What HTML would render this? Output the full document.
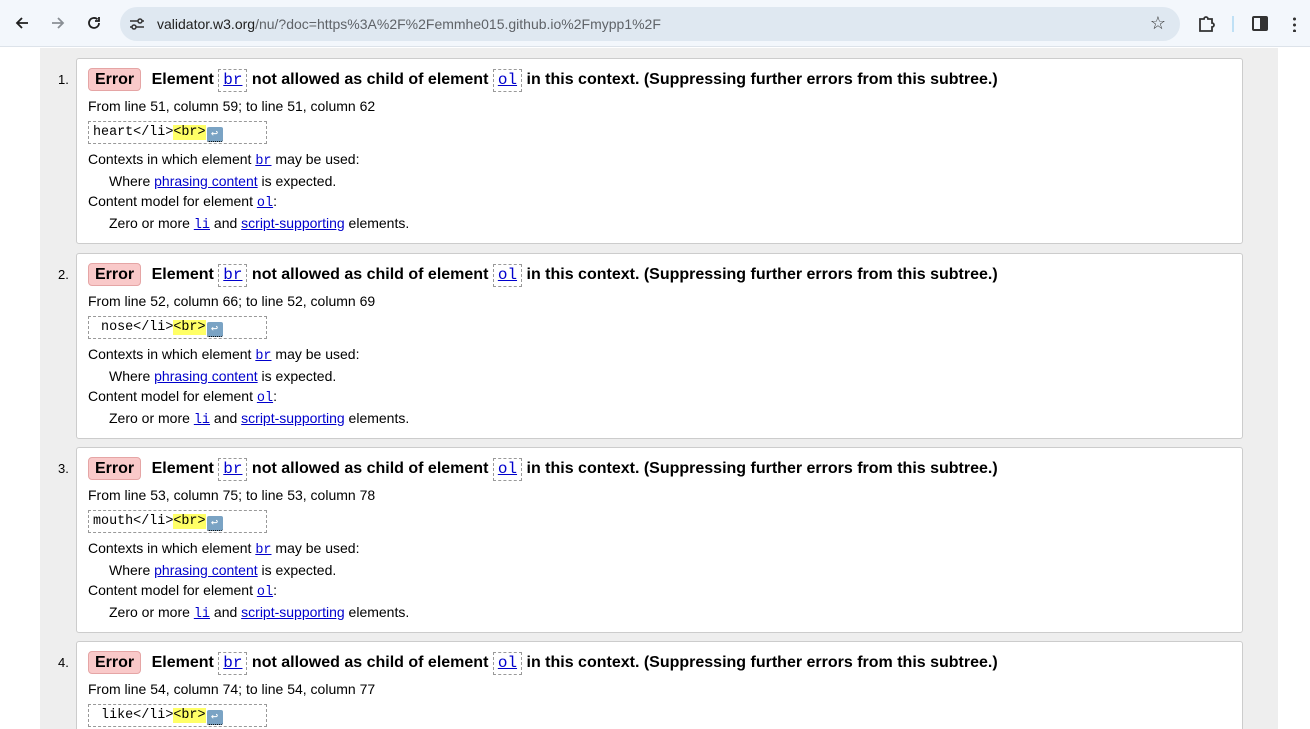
<!DOCTYPE html>
<html><head><meta charset="utf-8"><style>
*{margin:0;padding:0;box-sizing:border-box}
html,body{width:1310px;height:729px;overflow:hidden}
body{background:#fff;font-family:"Liberation Sans",Arial,sans-serif;position:relative;color:#000}
.bar{position:absolute;left:0;top:0;width:1310px;height:47px;background:#f3f7fc;border-bottom:1px solid #dde3ea}
.url{position:absolute;left:120px;top:7px;width:1060px;height:34px;border-radius:17px;background:#dfe8f1}
.url .t{position:absolute;left:37px;top:9px;font-size:14px;color:#1f1f1f}
.url .t span{color:#5f6368}
.gray{position:absolute;left:40px;top:48px;width:1238px;height:681px;background:#eee}
.card{position:absolute;left:76px;width:1167px;height:186px;background:#fff;border:1px solid #ccc;border-radius:3px}
.num{position:absolute;left:58px;font-size:13px}
.ab{position:absolute;white-space:nowrap}
.h{left:11px;top:9px;font-size:16px;font-weight:bold;line-height:24px}
.err{display:inline-block;background:#f9c9c9;border:1px solid #e5a5a5;border-radius:4px;padding:0 6px;height:23px;line-height:21px;margin-right:6px}
.c{display:inline-block;border:1px dashed #999;font-family:"Liberation Mono",monospace;font-weight:normal;padding:0 4px;height:23px;line-height:21px;font-size:16px}
a{color:#00c;text-decoration:underline}
.s{font-size:14px;left:11px}
.m{font-family:"Liberation Mono",monospace;font-size:13.5px}
.code{left:11px;width:179px;height:23px;border:1px dashed #999;font-family:"Liberation Mono",monospace;font-size:13.4px;line-height:21px;padding-left:4px}
.hl{background:#ff6}
.ret{display:inline-block;width:16px;height:15px;background:#7aa3c4;border-radius:2px;vertical-align:-2px;color:#fff;font-size:12px;line-height:15px;text-align:center;border-bottom:1px dotted #000;margin-left:1px}
.wrap{position:absolute;left:0;top:0;width:1310px;height:729px;overflow:hidden}
</style></head><body>
<div class="bar">
<svg style="position:absolute;left:14px;top:15px" width="16" height="16" viewBox="0 0 16 16"><path d="M14 8H3M8 3L3 8l5 5" stroke="#1f1f1f" stroke-width="1.8" fill="none"/></svg>
<svg style="position:absolute;left:50px;top:15px" width="16" height="16" viewBox="0 0 16 16"><path d="M2 8h11M8 3l5 5-5 5" stroke="#8a8f95" stroke-width="1.8" fill="none"/></svg>
<svg style="position:absolute;left:86px;top:15px" width="16" height="16" viewBox="0 0 16 16"><path d="M13 8a5 5 0 1 1-1.5-3.6M13 2v4h-4" stroke="#1f1f1f" stroke-width="1.8" fill="none"/></svg>
<div class="url"><svg style="position:absolute;left:9px;top:10px" width="16" height="14" viewBox="0 0 16 14"><path d="M1 4h8M13 4h2M1 10h2M7 10h8" stroke="#333" stroke-width="1.6"/><circle cx="11" cy="4" r="2" stroke="#333" stroke-width="1.5" fill="none"/><circle cx="5" cy="10" r="2" stroke="#333" stroke-width="1.5" fill="none"/></svg><div class="t">validator.w3.org<span>/nu/?doc=https%3A%2F%2Femmhe015.github.io%2Fmypp1%2F</span></div>
<div style="position:absolute;right:14px;top:6px;font-size:18px;color:#333">☆</div></div>
<svg style="position:absolute;left:1197px;top:14px" width="20" height="20" viewBox="0 0 20 20"><path d="M3 5h4a2 2 0 0 1 4 0h4v4a2 2 0 0 1 0 4v4H3z" stroke="#333" stroke-width="1.8" fill="none"/></svg>
<div style="position:absolute;left:1232px;top:16px;width:2px;height:16px;background:#bfe0f5"></div>
<div style="position:absolute;left:1252px;top:16px;width:16px;height:15px;border:2px solid #333;border-radius:2px"><div style="position:absolute;right:0;top:0;width:6px;height:11px;background:#333"></div></div>
<div style="position:absolute;left:1293px;top:16px;width:3px;height:16px;background:radial-gradient(circle,#333 1.4px,transparent 1.6px) 0 0/3px 6px"></div>
</div>
<div class="wrap">
<div class="gray"></div>
<div id="cards"></div>
</div>
<script>
const d=[[58,1,"51, column 59; to line 51, column 62","heart&lt;/li&gt;"],[253,2,"52, column 66; to line 52, column 69","&nbsp;nose&lt;/li&gt;"],[447,3,"53, column 75; to line 53, column 78","mouth&lt;/li&gt;"],[641,4,"54, column 74; to line 54, column 77","&nbsp;like&lt;/li&gt;"]];
let h="";
for(const [t,n,l,c] of d){
h+=`<div class="num" style="top:${t+14}px">${n}.</div><div class="card" style="top:${t}px">
<div class="ab h"><span class="err">Error</span> Element <span class="c"><a>br</a></span> not allowed as child of element <span class="c"><a>ol</a></span> in this context. (Suppressing further errors from this subtree.)</div>
<div class="ab s" style="top:39px">From line ${l}</div>
<div class="ab code" style="top:62px">${c}<span class="hl">&lt;br&gt;</span><span class="ret">↩</span></div>
<div class="ab s" style="top:92px">Contexts in which element <a class="m">br</a> may be used:</div>
<div class="ab s" style="left:32px;top:114px">Where <a>phrasing content</a> is expected.</div>
<div class="ab s" style="top:134px">Content model for element <a class="m">ol</a>:</div>
<div class="ab s" style="left:32px;top:156px">Zero or more <a class="m">li</a> and <a>script-supporting</a> elements.</div>
</div>`;}
document.getElementById("cards").innerHTML=h;
</script>
</body></html>
